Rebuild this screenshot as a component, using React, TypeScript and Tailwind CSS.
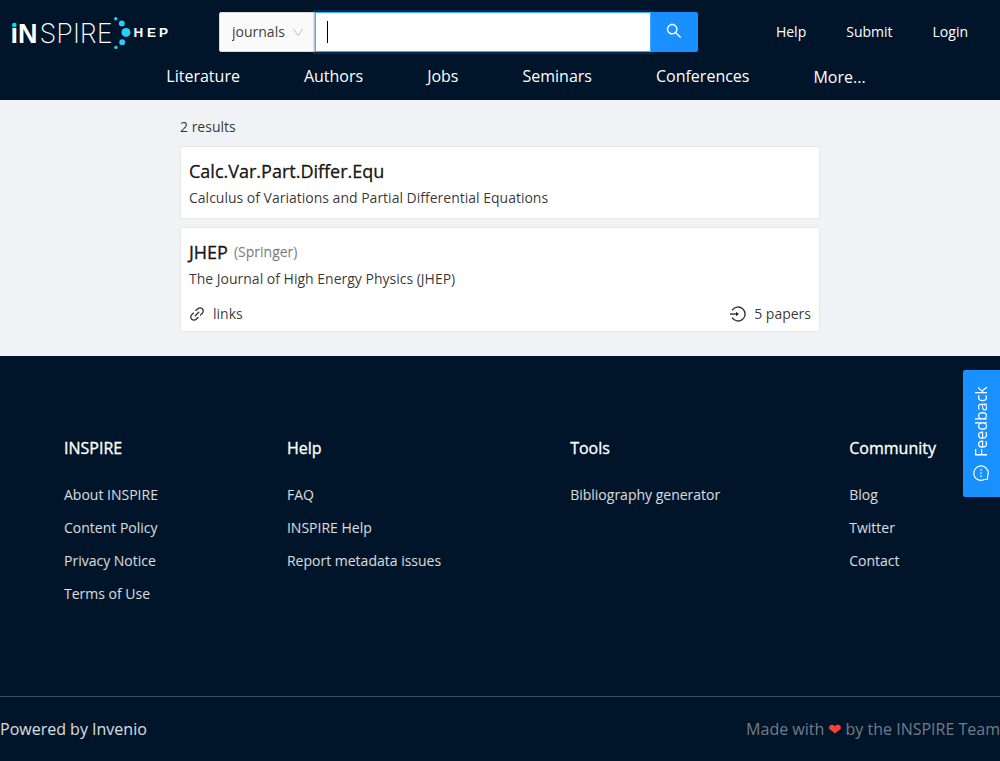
import React from "react";

const topLinks = ["Help", "Submit", "Login"];
const collections = ["Literature", "Authors", "Jobs", "Seminars", "Conferences"];
const footerColumns = [
  { title: "INSPIRE", links: ["About INSPIRE", "Content Policy", "Privacy Notice", "Terms of Use"] },
  { title: "Help", links: ["FAQ", "INSPIRE Help", "Report metadata issues"] },
  { title: "Tools", links: ["Bibliography generator"] },
  { title: "Community", links: ["Blog", "Twitter", "Contact"] },
];

function Logo() {
  return (
    <svg width="164" height="40" viewBox="-4 0 164 40" className="block" role="img" aria-label="iNSPIRE HEP">
      <g fill="#ffffff">
        <text y="30.5" fontSize="27" fontWeight="700" fontFamily="Liberation Sans, Arial, sans-serif">
          <tspan x="-1.5">ı</tspan>
          <tspan x="6">N</tspan>
        </text>
        <text x="27.5" y="30.5" fontSize="27" fontWeight="250" fontFamily="Inter, sans-serif">
          SPIRE
        </text>
        <text x="121.5 135 147" y="25" fontSize="13.5" fontWeight="700" fontFamily="Liberation Sans, Arial, sans-serif">
          HEP
        </text>
      </g>
      <g fill="#27cfff">
        <circle cx="2.3" cy="13" r="2.3" fill="#00e0f0" />
        <circle cx="103.8" cy="6.8" r="1.7" />
        <circle cx="109.8" cy="11.4" r="2.9" />
        <circle cx="114" cy="20.4" r="4.5" />
        <circle cx="110.2" cy="30.2" r="2.9" />
        <circle cx="103.9" cy="35.4" r="1.7" />
      </g>
    </svg>
  );
}

function SearchIcon() {
  return (
    <svg width="16" height="16" viewBox="64 64 896 896" fill="currentColor" aria-hidden="true">
      <path d="M909.6 854.5L649.9 594.8C690.2 542.7 712 479 712 412c0-80.2-31.3-155.4-87.9-212.1-56.6-56.7-132-87.9-212.1-87.9s-155.5 31.3-212.1 87.9C143.2 256.5 112 331.8 112 412c0 80.1 31.3 155.5 87.9 212.1C256.5 680.8 331.8 712 412 712c67 0 130.6-21.8 182.7-62l259.7 259.6a8.2 8.2 0 0 0 11.6 0l43.6-43.5a8.2 8.2 0 0 0 0-11.6zM570.4 570.4C528 612.7 471.8 636 412 636s-116-23.3-158.4-65.6C211.3 528 188 471.8 188 412s23.3-116.1 65.6-158.4C296 211.3 352.2 188 412 188s116.1 23.2 158.4 65.6S636 352.2 636 412s-23.3 116.1-65.6 158.4z" />
    </svg>
  );
}

function LinkIcon() {
  return (
    <svg width="16" height="16" viewBox="64 64 896 896" fill="currentColor" aria-hidden="true">
      <path d="M574 665.400a8.030 8.030 0 0 0-11.300 0L446.500 781.600c-53.800 53.800-144.600 59.500-204 0-59.500-59.500-53.800-150.200 0-204l116.200-116.200c3.100-3.100 3.100-8.200 0-11.300l-39.800-39.800a8.030 8.030 0 0 0-11.300 0L191.400 526.500c-84.600 84.600-84.600 221.500 0 306s221.500 84.600 306 0l116.200-116.200c3.100-3.100 3.100-8.200 0-11.300L574 665.400zm258.600-474c-84.600-84.600-221.500-84.600-306 0L410.300 307.600a8.030 8.030 0 0 0 0 11.300l39.700 39.700c3.100 3.100 8.200 3.100 11.300 0l116.200-116.200c53.800-53.800 144.600-59.500 204 0 59.500 59.500 53.800 150.200 0 204L665.300 562.600a8.030 8.030 0 0 0 0 11.300l39.800 39.800c3.100 3.100 8.200 3.100 11.300 0l116.200-116.200c84.500-84.600 84.500-221.500 0-306.100zM610.100 372.300a8.030 8.030 0 0 0-11.300 0L372.300 598.700a8.030 8.030 0 0 0 0 11.300l39.600 39.600c3.100 3.100 8.200 3.100 11.300 0l226.400-226.400c3.100-3.100 3.100-8.200 0-11.300l-39.500-39.600z" />
    </svg>
  );
}

function PapersIcon() {
  return (
    <svg width="16" height="16" viewBox="0 0 16 16" fill="none" stroke="currentColor" strokeWidth="1.4" aria-hidden="true">
      <path d="M2.1 4.400A7 7 0 1 1 2.100 11.600" />
      <path d="M0 8H7" />
      <path d="M6 5.800L9 8L6 10.200Z" fill="currentColor" stroke="none" />
    </svg>
  );
}

function MessageIcon() {
  return (
    <svg
      width="16"
      height="16"
      viewBox="0 0 16 16"
      fill="none"
      stroke="currentColor"
      strokeWidth="1.2"
      className="rotate-90"
      aria-hidden="true"
    >
      <path d="M8 .8A7.200 7.200 0 0 0 1.500 11.200V13.700Q1.500 14.500 2.300 14.500H4.800A7.200 7.200 0 1 0 8 .8Z" />
      <g fill="currentColor" stroke="none">
        <circle cx="4.900" cy="8" r=".8" />
        <circle cx="8" cy="8" r=".8" />
        <circle cx="11.100" cy="8" r=".8" />
      </g>
    </svg>
  );
}

export default function App() {
  return (
    <div className="flex min-h-screen flex-col bg-[#001529] font-['Open_Sans','Noto_Sans',sans-serif] text-sm text-black/80">
      <header className="bg-[#001529] pb-3 pt-3 text-white">
        <div className="flex h-10 items-center pl-2 pr-8">
          <a href="#" className="mr-[47px] shrink-0">
            <Logo />
          </a>
          <form className="flex h-10 min-w-0 flex-1" onSubmit={(e) => e.preventDefault()}>
            <div className="relative w-24 shrink-0">
              <select
                aria-label="Collection"
                defaultValue="journals"
                className="h-10 w-full appearance-none rounded-l-[2px] border border-[#d9d9d9] bg-[#fafafa] pl-3 text-sm text-[#404040] outline-none"
              >
                <option>journals</option>
                <option>literature</option>
                <option>authors</option>
              </select>
              <svg
                className="pointer-events-none absolute right-3 top-4 text-[#bfbfbf]"
                width="10"
                height="10"
                viewBox="0 0 10 10"
                fill="none"
                stroke="currentColor"
                aria-hidden="true"
              >
                <path d="M.4 .8L5 7.600L9.600 .8" />
              </svg>
            </div>
            <div className="z-10 flex min-w-0 flex-1 items-center border border-[#40a9ff] bg-white px-[11px] text-[#262626] shadow-[0_0_0_2px_rgba(24,144,255,0.2)]">
              <span className="h-[22px] w-px shrink-0 bg-black" />
              <input type="text" aria-label="Search" className="h-full w-full min-w-0 bg-transparent text-base caret-transparent outline-none" />
            </div>
            <button type="submit" aria-label="Submit search" className="z-20 flex w-[47px] items-center justify-center rounded-r-[2px] bg-[#1890ff] pb-0.5">
              <SearchIcon />
            </button>
          </form>
          <nav aria-label="Account" className="ml-[78px] flex shrink-0 gap-10">
            {topLinks.map((l) => (
              <a key={l} href="#">
                {l}
              </a>
            ))}
          </nav>
        </div>
        <nav aria-label="Collections" className="mt-3 flex h-6 items-center justify-center gap-16 pl-8 text-base">
          {collections.map((l) => (
            <a key={l} href="#">
              {l}
            </a>
          ))}
          <button type="button" className="pt-0.5">
            More...
          </button>
        </nav>
      </header>

      <main className="bg-[#f0f2f5] px-4 pb-6 pt-4">
        <div className="mx-auto flex max-w-[640px] flex-col">
          <p className="mb-2 leading-[22px]">2 results</p>
          <article className="mb-2 rounded-[2px] border border-[#e8e8e8] bg-white px-2 pb-[9px] pt-2.5">
            <h2 className="text-lg font-medium leading-7 text-black/90 [-webkit-text-stroke:0.02em]">
              <a href="#">Calc.Var.Part.Differ.Equ</a>
            </h2>
            <p className="mt-0.5 leading-[22px]">Calculus of Variations and Partial Differential Equations</p>
          </article>
          <article className="rounded-[2px] border border-[#e8e8e8] bg-white px-2 pb-1.5 pt-2.5">
            <div className="flex items-center">
              <h2 className="text-lg font-medium leading-7 text-black/90 [-webkit-text-stroke:0.02em]">
                <a href="#">JHEP</a>
              </h2>
              <span className="ml-1.5 font-medium text-black/45 [-webkit-text-stroke:0.02em]">(Springer)</span>
            </div>
            <p className="mt-0.5 leading-[22px]">The Journal of High Energy Physics (JHEP)</p>
            <div className="mt-[13px] flex justify-between leading-[22px]">
              <a href="#" className="flex items-center gap-2">
                <LinkIcon />
                links
              </a>
              <a href="#" className="flex items-center gap-2">
                <PapersIcon />
                5 papers
              </a>
            </div>
          </article>
        </div>
      </main>

      <footer className="text-white/85">
        <div className="flex justify-between px-16 pb-[91px] pt-20">
          {footerColumns.map((c) => (
            <section key={c.title}>
              <h2 className="mb-6 text-base font-medium leading-6 text-white [-webkit-text-stroke:0.02em]">{c.title}</h2>
              <ul className="flex flex-col gap-[11px] leading-[22px]">
                {c.links.map((l) => (
                  <li key={l}>
                    <a href="#">{l}</a>
                  </li>
                ))}
              </ul>
            </section>
          ))}
        </div>
        <div className="flex justify-between border-t border-[#404f5e] pb-5 pt-5 text-base leading-6">
          <a href="#">Powered by Invenio</a>
          <span className="text-white/45">
            Made with <span className="text-[#ff4035]">❤</span> by the INSPIRE Team
          </span>
        </div>
      </footer>

      <button
        type="button"
        className="fixed right-0 top-[370px] z-30 flex h-[127px] w-[37px] rotate-180 items-center justify-start gap-2 rounded-r-[2px] bg-[#1890ff] pb-4 pt-4 text-base text-white [writing-mode:vertical-rl]"
      >
        <MessageIcon />
        Feedback
      </button>
    </div>
  );
}
